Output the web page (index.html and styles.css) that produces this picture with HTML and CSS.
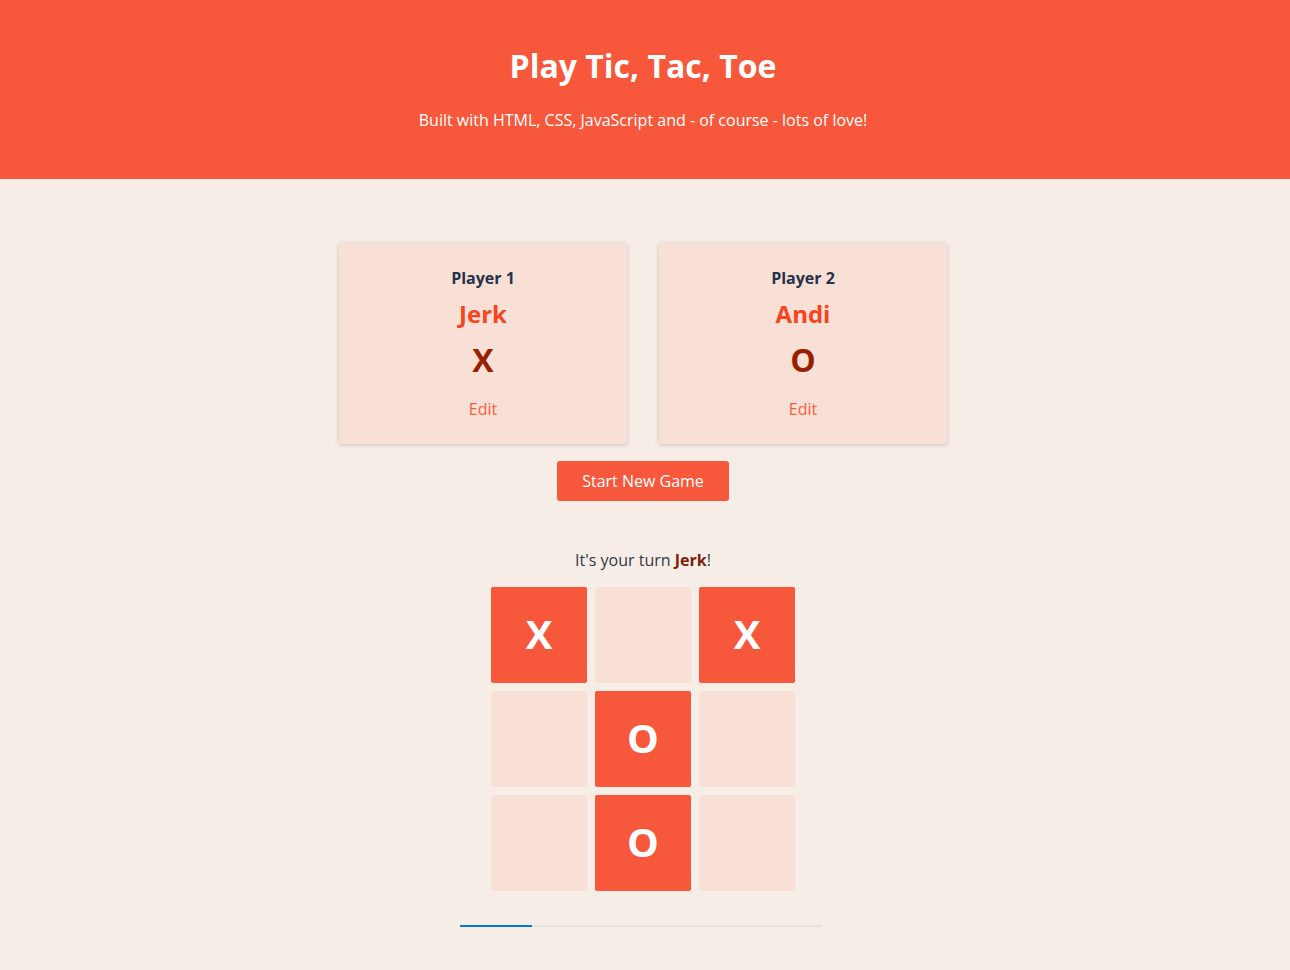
FILE: index.html
```html
<!DOCTYPE html>
<html lang="en">
<head>
<meta charset="utf-8">
<title>Tic Tac Toe</title>
<link rel="stylesheet" href="styles.css">
</head>
<body>
<header class="site-header">
  <h1 class="title">Play Tic, Tac, Toe</h1>
  <p class="subtitle">Built with HTML, CSS, JavaScript and - of course - lots of love!</p>
</header>
<main class="main">
  <section class="players">
    <article class="player-card">
      <h2 class="player-label">Player 1</h2>
      <h3 class="player-name">Jerk</h3>
      <p class="player-symbol">X</p>
      <button class="edit-btn">Edit</button>
    </article>
    <article class="player-card">
      <h2 class="player-label">Player 2</h2>
      <h3 class="player-name">Andi</h3>
      <p class="player-symbol">O</p>
      <button class="edit-btn">Edit</button>
    </article>
  </section>
  <button class="start-btn">Start New Game</button>
  <p class="turn">It's your turn <span class="turn-name">Jerk</span>!</p>
  <ol class="board">
    <li class="cell filled">X</li>
    <li class="cell"></li>
    <li class="cell filled">X</li>
    <li class="cell"></li>
    <li class="cell filled">O</li>
    <li class="cell"></li>
    <li class="cell"></li>
    <li class="cell filled">O</li>
    <li class="cell"></li>
  </ol>
  <div class="progress"><div class="progress-fill"></div></div>
</main>
</body>
</html>
```
FILE: styles.css
```css
* { box-sizing: border-box; }
html, body { margin: 0; padding: 0; }
body {
  font-family: "Open Sans", "Noto Sans", sans-serif;
  background: #f6ede6;
  color: #2f3a45;
  min-height: 970px;
}
.site-header {
  background: #f7573a;
  color: #fff;
  text-align: center;
  padding: 42px 4px 47px 0;
  height: 179px;
}
.title {
  margin: 0;
  font-size: 32px;
  line-height: 48px;
  font-weight: 700;
}
.subtitle {
  margin: 18px 0 0;
  font-size: 16px;
  line-height: 24px;
}
.main {
  display: flex;
  flex-direction: column;
  align-items: center;
  padding: 64px 4px 0 0;
}
.players {
  display: flex;
  gap: 32px;
}
.player-card {
  width: 288px;
  height: 201px;
  background: #f9e0d7;
  border-radius: 4px;
  box-shadow: 0 1px 5px rgba(0, 0, 0, 0.18);
  text-align: center;
  padding-top: 23px;
  display: flex;
  flex-direction: column;
  align-items: center;
}
.player-label {
  margin: 0;
  font-size: 16px;
  line-height: 24px;
  font-weight: 700;
  color: #26324a;
}
.player-name {
  margin: 8px 0 0;
  font-size: 24px;
  line-height: 32px;
  font-weight: 700;
  color: #f5441e;
}
.player-symbol {
  margin: 10px 0 0;
  font-size: 32px;
  line-height: 40px;
  font-weight: 700;
  color: #9a1f00;
}
.edit-btn {
  margin-top: 17px;
  font-family: inherit;
  font-size: 16px;
  line-height: 24px;
  background: none;
  border: none;
  padding: 0;
  color: #f5603c;
  cursor: pointer;
}
.start-btn {
  margin-top: 17px;
  width: 172px;
  height: 40px;
  background: #f7573a;
  color: #fff;
  border: none;
  border-radius: 3px;
  font-family: inherit;
  font-size: 16px;
  cursor: pointer;
}
.turn {
  margin: 47px 0 0;
  font-size: 16px;
  line-height: 24px;
  color: #2f3a45;
}
.turn-name {
  font-weight: 700;
  color: #7a1e0c;
}
.board {
  list-style: none;
  margin: 15px 0 0;
  padding: 0;
  display: grid;
  grid-template-columns: repeat(3, 96px);
  grid-auto-rows: 96px;
  gap: 8px;
}
.cell {
  background: #f9e0d7;
  border-radius: 2px;
  display: flex;
  align-items: center;
  justify-content: center;
  padding-bottom: 4px;
  font-size: 40px;
  font-weight: 700;
  color: #fff;
}
.cell.filled { background: #f7573a; }
.progress {
  margin: 34px 0 0 -4px;
  width: 362px;
  height: 2px;
  background: #e4e2df;
}
.progress-fill {
  width: 72px;
  height: 2px;
  background: #0078d4;
}
```
